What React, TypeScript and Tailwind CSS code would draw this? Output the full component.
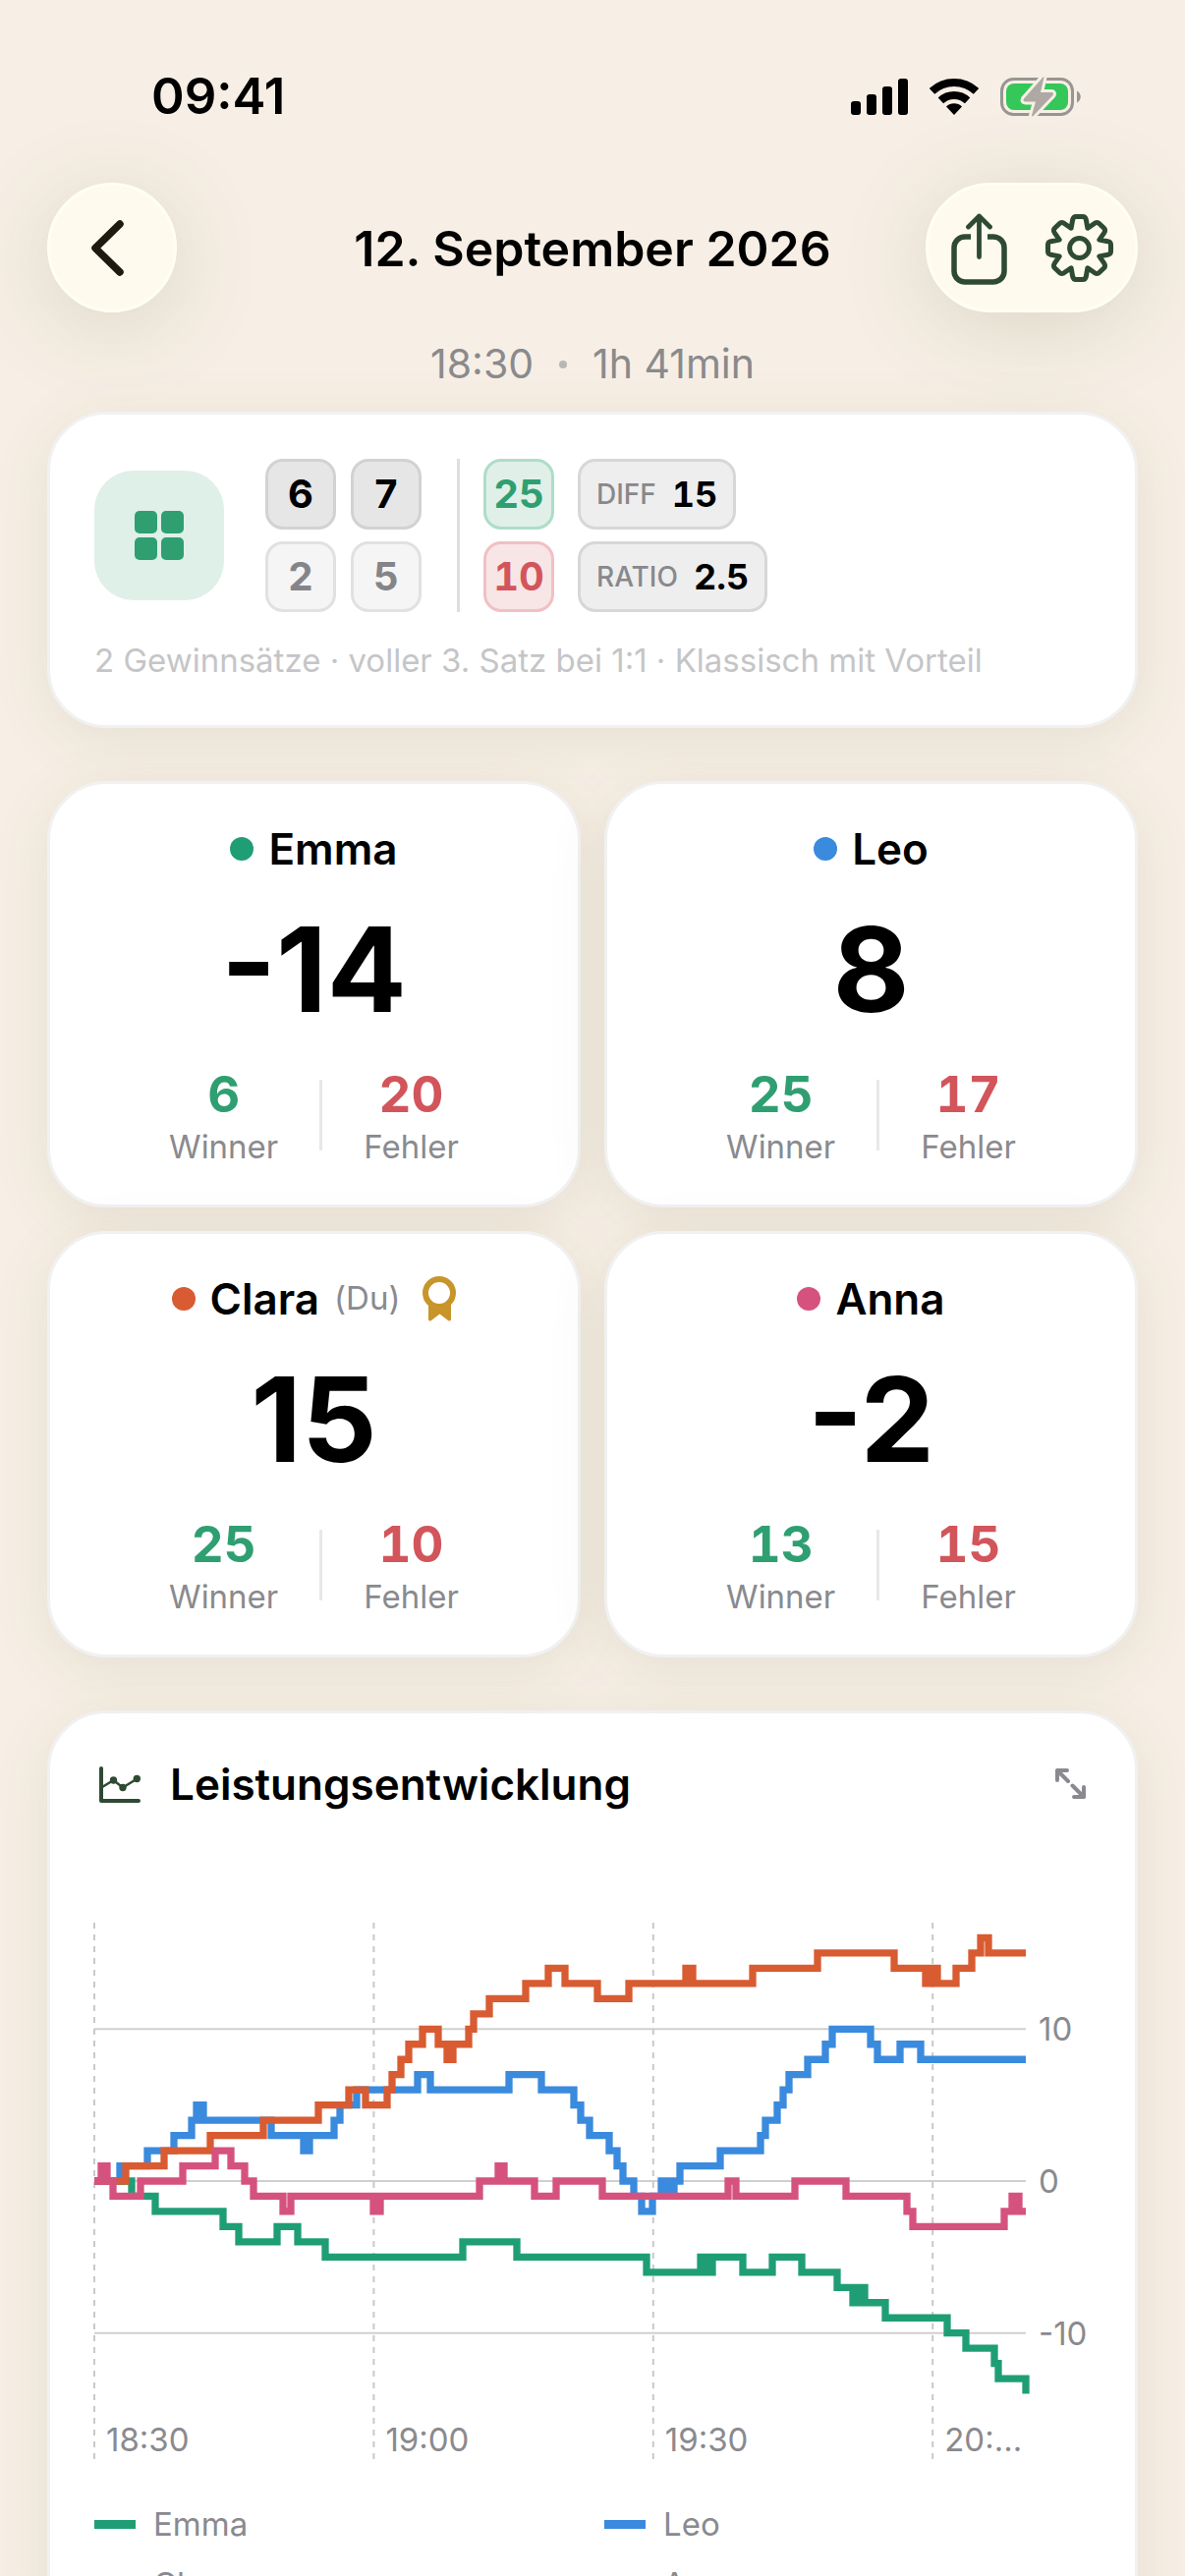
import React from 'react';
import clsx from 'clsx';

type Step = [number, number];

interface Player {
    name: string;
    isMe?: boolean;
    score: number;
    winner: number;
    errors: number;
    color: string;
    dot: string;
    steps: Step[];
}

// steps: [x offset on the time axis, score from there on]
const players: Player[] = [
    {
        name: 'Emma',
        score: -14,
        winner: 6,
        errors: 20,
        color: '#1f9e75',
        dot: 'bg-[#1f9e75]',
        steps: [
            [38, -1], [62, -2], [131, -3], [147, -4], [186, -3], [207, -4], [235, -5], [375, -4], [430, -5],
            [562, -6], [617, -5], [623, -6], [629, -5], [660, -6], [690, -5], [720, -6], [756, -7], [772, -8],
            [777, -7], [784, -8], [805, -9], [868, -10], [887, -11], [916, -12], [920, -13], [948, -14]
        ]
    },
    {
        name: 'Leo',
        score: 8,
        winner: 25,
        errors: 17,
        color: '#3a8ade',
        dot: 'bg-[#3a8ade]',
        steps: [
            [26, 1], [54, 2], [81, 3], [99, 4], [104, 5], [111, 4], [180, 3], [213, 2], [219, 3], [244, 4],
            [250, 5], [267, 6], [329, 7], [342, 6], [422, 7], [455, 6], [488, 5], [495, 4], [504, 3], [524, 2],
            [532, 1], [538, 0], [549, -1], [557, -2], [568, -1], [577, 0], [583, -1], [590, 0], [596, 1],
            [637, 2], [678, 3], [683, 4], [695, 5], [701, 6], [707, 7], [726, 8], [744, 9], [751, 10],
            [790, 9], [797, 8], [820, 9], [841, 8]
        ]
    },
    {
        name: 'Clara',
        isMe: true,
        score: 15,
        winner: 25,
        errors: 10,
        color: '#d95b31',
        dot: 'bg-[#d95b31]',
        steps: [
            [32, 1], [71, 2], [118, 3], [172, 4], [228, 5], [259, 6], [276, 5], [298, 6], [303, 7], [312, 8],
            [320, 9], [334, 10], [350, 9], [359, 8], [365, 9], [381, 10], [386, 11], [402, 12], [439, 13],
            [462, 14], [479, 13], [512, 12], [544, 13], [602, 14], [609, 13], [670, 14], [736, 15], [814, 14],
            [846, 13], [852, 14], [858, 13], [877, 14], [893, 15], [902, 16], [910, 15]
        ]
    },
    {
        name: 'Anna',
        score: -2,
        winner: 13,
        errors: 15,
        color: '#d5527f',
        dot: 'bg-[#d5527f]',
        steps: [
            [7, 1], [13, 0], [19, -1], [47, 0], [90, 1], [123, 2], [139, 1], [153, 0], [162, -1], [192, -2],
            [200, -1], [284, -2], [291, -1], [392, 0], [411, 1], [417, 0], [448, -1], [470, 0], [517, -1],
            [645, 0], [653, -1], [713, 0], [765, -1], [827, -2], [833, -3], [926, -2], [934, -1], [941, -2]
        ]
    }
];

const PLOT_WIDTH = 948;
const yFor = (score: number) => 281 - score * 15.47;

const stepPath = (steps: Step[]) =>
    `M0 ${yFor(0)}` + steps.map(([x, score]) => `H${x}V${yFor(score)}`).join('') + `H${PLOT_WIDTH}`;

const gearPath = () => {
    const tooth = [[-8.4, -20.3], [-6.8, -29], [-6, -32], [-3.5, -32], [3.5, -32], [6, -32], [6.8, -29], [8.4, -20.3]];
    const parts: string[] = [];
    for (let i = 0; i < 8; i++) {
        const a = (i * Math.PI) / 4;
        const p = tooth.map(([x, y]) =>
            `${(34.5 + x * Math.cos(a) - y * Math.sin(a)).toFixed(2)} ${(34.5 + x * Math.sin(a) + y * Math.cos(a)).toFixed(2)}`
        );
        parts.push(`${i === 0 ? 'M' : 'L'}${p[0]}L${p[1]}Q${p[2]} ${p[3]}L${p[4]}Q${p[5]} ${p[6]}L${p[7]}`);
    }
    return parts.join('') + 'Z';
};

const StatusBar = () => (
    <div className="flex h-[186px] items-start justify-between pt-[68px] pr-[106px] pl-[154px]">
        <span className="text-[51px] leading-[60px] font-semibold">09:41</span>
        <div className="flex items-center gap-[22px] pt-[11px]">
            <svg className="h-[37px] w-[58px]" viewBox="0 0 58 37" aria-hidden="true">
                <rect x="0" y="23" width="10" height="14" rx="3" />
                <rect x="16" y="16" width="10" height="21" rx="3" />
                <rect x="32" y="8" width="10" height="29" rx="3" />
                <rect x="48" y="0" width="10" height="37" rx="3" />
            </svg>
            <svg className="h-[37px] w-[50px]" viewBox="0 0 50 37" aria-hidden="true">
                <g fill="none" stroke="black" strokeWidth="8">
                    <path d="M2.5 12.9A33 33 0 0 1 47.5 12.9" />
                    <path d="M11.4 22.4A20 20 0 0 1 38.6 22.4" />
                </g>
                <path d="M25 37L17 28.4A11.7 11.7 0 0 1 33 28.4Z" />
            </svg>
            <svg className="h-[39px] w-[82px] overflow-visible" viewBox="0 0 82 39" aria-hidden="true">
                <rect x="1.5" y="1.5" width="72" height="36" rx="12" fill="none" stroke="#999590" strokeWidth="3" />
                <path d="M78 13.5C83 16 83 23 78 25.5Z" fill="#999590" />
                <rect x="6" y="6" width="63" height="27" rx="8" fill="#35c759" />
                <path
                    d="M43.5 -.5L24 21.5Q22.5 24.5 25.5 24.5H36L32 38.5Q32.5 40 33.5 39L53.5 18Q55 15 52 15H41L44.500 -.5Z"
                    fill="#aea9a3"
                    stroke="#f7efe5"
                    strokeWidth="6"
                    strokeLinejoin="round"
                    paintOrder="stroke"
                />
            </svg>
        </div>
    </div>
);

const Header = () => (
    <header className="grid grid-cols-[1fr_auto_1fr] items-center">
        <button
            aria-label="Zurück"
            className="flex size-[132px] items-center justify-center rounded-full border-3 border-[#fffef2] bg-[#fffaee] pr-[10px] shadow-[0_14px_90px_rgba(80,90,50,0.17)]"
        >
            <svg className="h-[57px] w-[33px]" viewBox="0 0 33 57" fill="none" aria-hidden="true">
                <path d="M29 4L4 28.500L29 53" stroke="#1f1a10" strokeWidth="7.500" strokeLinecap="round" strokeLinejoin="round" />
            </svg>
        </button>
        <h1 className="pt-0.5 text-[50px] leading-[60px] font-semibold">12. September 2026</h1>
        <div className="flex h-[132px] w-[216px] items-center justify-between justify-self-end rounded-full border-3 border-[#fffef2] bg-[#fffaee] pr-[22px] pl-[23px] shadow-[0_14px_90px_rgba(80,90,50,0.17)]">
            <button aria-label="Teilen" className="pt-1">
                <svg className="h-[74px] w-[58px]" viewBox="0 0 58 74" fill="none" stroke="#2e4a33" strokeLinecap="round" strokeLinejoin="round" aria-hidden="true">
                    <path d="M20 24H14A11 11 0 0 0 3 35V59A11 11 0 0 0 14 70H43A11 11 0 0 0 54 59V35A11 11 0 0 0 43 24H37" strokeWidth="5.500" strokeLinecap="butt" />
                    <path d="M28.500 3V44.500M17.500 14L28.500 3L39.500 14" strokeWidth="4.800" />
                </svg>
            </button>
            <button aria-label="Einstellungen">
                <svg className="size-[69px]" viewBox="0 0 69 69" fill="none" stroke="#2e4a33" strokeWidth="5" strokeLinejoin="round" aria-hidden="true">
                    <path d={gearPath()} />
                    <circle cx="34.500" cy="34.500" r="9.900" />
                </svg>
            </button>
        </div>
    </header>
);

const cardClass = 'rounded-[60px] border-3 border-[#f1f1f2] bg-white shadow-[0_12px_60px_rgba(80,85,40,0.10)]';

interface TileProps {
    children: React.ReactNode;
    className: string;
}

const Tile: React.FC<TileProps> = ({ children, className }) => (
    <span className={clsx('flex size-[72px] items-center justify-center rounded-[18px] border-3 text-[40px] leading-none font-bold tabular-nums', className)}>
        {children}
    </span>
);

const Chip = ({ label, value }: { label: string; value: string }) => (
    <span className="flex h-[72px] items-center gap-4 rounded-[18px] border-3 border-[#d7d7d8] bg-[#eeeeee] px-4">
        <span className="text-[28px] font-medium text-[#88888c]">{label}</span>
        <span className="text-[36px] font-bold tabular-nums">{value}</span>
    </span>
);

const MatchSummary = () => (
    <section className={clsx(cardClass, 'p-[45px]')}>
        <div className="flex items-center">
            <div className="flex size-[132px] items-center justify-center rounded-[40px] bg-[#dff0e8]">
                <svg className="size-[50px]" viewBox="0 0 50 50" fill="#2f9f72" aria-hidden="true">
                    <rect width="23" height="23" rx="5" />
                    <rect x="27" width="23" height="23" rx="5" />
                    <rect y="27" width="23" height="23" rx="5" />
                    <rect x="27" y="27" width="23" height="23" rx="5" />
                </svg>
            </div>
            <div className="ml-[42px] grid grid-cols-2 gap-x-[15px] gap-y-3">
                <Tile className="border-[#d2d2d3] bg-[#e6e6e6]">6</Tile>
                <Tile className="border-[#d2d2d3] bg-[#e6e6e6]">7</Tile>
                <Tile className="border-[#e1e1e2] bg-[#f5f5f5] text-[#858589]">2</Tile>
                <Tile className="border-[#e1e1e2] bg-[#f5f5f5] text-[#858589]">5</Tile>
            </div>
            <div className="ml-9 h-[156px] w-[3px] bg-[#dedede]"></div>
            <div className="ml-6 flex flex-col gap-3">
                <Tile className="border-[#afdcc9] bg-[#e0f0e8] text-[#2f9f72]">25</Tile>
                <Tile className="border-[#f0c0c4] bg-[#f8e5e6] text-[#d2555b]">10</Tile>
            </div>
            <div className="ml-6 flex flex-col items-start gap-3">
                <Chip label="DIFF" value="15" />
                <Chip label="RATIO" value="2.5" />
            </div>
        </div>
        <p className="mt-7 text-[33px] leading-[42px] text-[#c5c5c7]">
            2 Gewinnsätze · voller 3. Satz bei 1:1 · Klassisch mit Vorteil
        </p>
    </section>
);

const Medal = () => (
    <svg className="ml-2 h-[46px] w-[34px]" viewBox="0 0 34 46" aria-hidden="true">
        <circle cx="17" cy="17" r="14" fill="none" stroke="#c8952b" strokeWidth="6" />
        <path d="M6 28Q17 34 29 28V44Q28.500 46.500 26 45L17.500 38.500L9 45Q6.500 46.500 6 44Z" fill="#c8952b" />
    </svg>
);

const Stat = ({ value, label, className }: { value: number; label: string; className: string }) => (
    <div className="flex flex-col items-center gap-0.5">
        <span className={clsx('text-[51px] leading-[62px] font-bold tabular-nums', className)}>{value}</span>
        <span className="text-[33px] leading-[40px] text-[#8a8a8e]">{label}</span>
    </div>
);

const PlayerCard = ({ player }: { player: Player }) => (
    <article className={clsx(cardClass, 'flex flex-col items-center pt-[39px] pb-[39px]')}>
        <div className="flex h-[54px] items-center gap-[15px]">
            <span className={clsx('size-6 rounded-full', player.dot)}></span>
            <h2 className="text-[44px] leading-[54px] font-semibold">{player.name}</h2>
            {player.isMe && (
                <>
                    <span className="text-[33px] text-[#8a8a8e]">(Du)</span>
                    <Medal />
                </>
            )}
        </div>
        <p className="mt-9 text-[120px] leading-[120px] font-bold">{player.score}</p>
        <div className="mt-9 flex items-center gap-[42px]">
            <Stat value={player.winner} label="Winner" className="text-[#2f9f72]" />
            <div className="h-[72px] w-[3px] bg-[#e8e8e9]"></div>
            <Stat value={player.errors} label="Fehler" className="text-[#d2555b]" />
        </div>
    </article>
);

const PerformanceChart = () => (
    <section className={clsx(cardClass, 'p-[45px]')}>
        <div className="flex items-center">
            <svg className="ml-[5px] h-[37px] w-[42px]" viewBox="0 0 42 37" aria-hidden="true">
                <path d="M2 2V35H40" fill="none" stroke="#2e4a33" strokeWidth="4" strokeLinecap="round" strokeLinejoin="round" />
                <path d="M3 21L14.500 14L24 21.500L38.500 12.500" fill="none" stroke="#2e4a33" strokeWidth="2.500" />
                <g fill="#2e4a33">
                    <circle cx="14.500" cy="14" r="3.700" />
                    <circle cx="24" cy="21.500" r="3.700" />
                    <circle cx="38.300" cy="12.500" r="3.700" />
                </g>
            </svg>
            <h2 className="ml-[30px] text-[44px] leading-[54px] font-semibold">Leistungsentwicklung</h2>
            <button aria-label="Vergrößern" className="mr-1 ml-auto">
                <svg className="size-[32px]" viewBox="0 0 32 32" fill="none" stroke="#8a8a8e" strokeWidth="4" strokeLinecap="round" strokeLinejoin="round" aria-hidden="true">
                    <path d="M12 2H2V12M2 2L13 13M19 29H29V19M29 29L17.500 17.500" />
                </svg>
            </button>
        </div>

        <svg className="mt-24 block h-auto w-full overflow-visible" viewBox="0 0 1014 572" role="img" aria-label="Leistungsentwicklung">
            {[10, 0, -10].map(value => (
                <g key={value}>
                    <line x1="0" x2={PLOT_WIDTH} y1={yFor(value)} y2={yFor(value)} stroke="#cfcfd0" strokeWidth="2" />
                    <text x="961" y={yFor(value) + 12} className="fill-[#8a8a8e] text-[33px]">{value}</text>
                </g>
            ))}
            {['18:30', '19:00', '19:30', '20:...'].map((time, i) => (
                <g key={time}>
                    <line x1={i * 284.4} x2={i * 284.4} y1="18" y2="564" stroke="#c9c9ca" strokeWidth="2" strokeDasharray="6 6" />
                    <text x={i * 284.4 + 12} y="556" className="fill-[#8a8a8e] text-[33px]">{time}</text>
                </g>
            ))}
            {players.map(player => (
                <path key={player.name} d={stepPath(player.steps)} fill="none" stroke={player.color} strokeWidth="7.300" />
            ))}
        </svg>

        <ul className="mt-9 grid grid-cols-2 gap-x-6 gap-y-[17px]">
            {players.map(player => (
                <li key={player.name} className="flex items-center gap-[18px] text-[33px] leading-[44px] text-[#8a8a8e]">
                    <span className={clsx('h-[9px] w-[42px]', player.dot)}></span>
                    {player.name}
                </li>
            ))}
        </ul>
    </section>
);

export default function App() {
    return (
        <div className="h-screen overflow-hidden bg-[#f7efe5] font-['Inter',sans-serif] text-black">
            <StatusBar />
            <main className="px-12">
                <Header />
                <p className="mt-7 mb-6 flex items-center justify-center gap-[26px] text-[41px] leading-[49px] text-[#8a8a8c]">
                    <time>18:30</time>
                    <span className="size-2 rounded-full bg-[#b9b6b3]"></span>
                    <span>1h 41min</span>
                </p>
                <MatchSummary />
                <div className="mt-[54px] mb-[54px] grid grid-cols-2 gap-6">
                    {players.map(player => (
                        <PlayerCard key={player.name} player={player} />
                    ))}
                </div>
                <PerformanceChart />
            </main>
        </div>
    );
}
